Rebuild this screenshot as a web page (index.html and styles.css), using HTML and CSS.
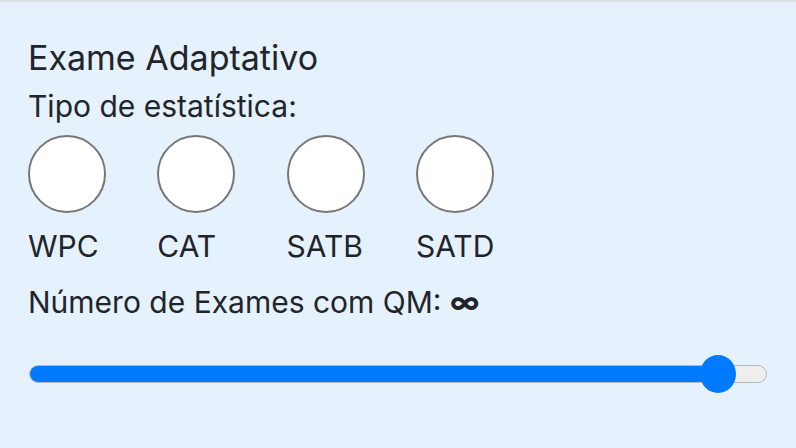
FILE: index.html
```html
<!DOCTYPE html>
<html lang="pt">
<head>
<meta charset="utf-8">
<link rel="stylesheet" href="styles.css">
</head>
<body>
<div class="panel">
  <div class="title">Exame Adaptativo</div>
  <div class="label">Tipo de estatística:</div>
  <div class="radios">
    <div class="opt"><span class="circle"></span><span class="opt-text">WPC</span></div>
    <div class="opt"><span class="circle"></span><span class="opt-text">CAT</span></div>
    <div class="opt"><span class="circle"></span><span class="opt-text">SATB</span></div>
    <div class="opt"><span class="circle"></span><span class="opt-text">SATD</span></div>
  </div>
  <div class="label count">Número de Exames com QM: <span class="inf">∞</span></div>
  <div class="slider">
    <div class="track">
      <div class="fill" style="width: 93.4%"></div>
    </div>
    <div class="thumb" style="left: 93.4%"></div>
  </div>
</div>
</body>
</html>
```
FILE: styles.css
```css
html, body {
  margin: 0;
  padding: 0;
  background: #e5f1fd;
}
body {
  width: 796px;
  height: 448px;
  overflow: hidden;
  font-family: "Inter", "Liberation Sans", sans-serif;
  color: #212529;
}
.panel {
  border-top: 2px solid #dcdfe3;
  padding: 0 28px;
  height: 446px;
}
.title {
  font-size: 34px;
  line-height: 40px;
  margin-top: 36px;
}
.label {
  font-size: 30px;
  line-height: 36px;
  margin-top: 10px;
}
.radios {
  display: flex;
  gap: 51.3px;
  margin-top: 11px;
}
.opt {
  display: flex;
  flex-direction: column;
  align-items: flex-start;
  width: 78px;
}
.circle {
  width: 78px;
  height: 78px;
  box-sizing: border-box;
  border: 2px solid #777;
  border-radius: 50%;
  background: #fff;
}
.opt-text {
  font-size: 30px;
  line-height: 36px;
  margin-top: 15px;
}
.count {
  margin-top: 20px;
}
.inf {
  font-weight: 700;
}
.slider {
  position: relative;
  margin: 45px 1px 0 1px;
  height: 18px;
}
.track {
  height: 18px;
  box-sizing: border-box;
  border: 1.5px solid #b8b8b8;
  border-radius: 9px;
  background: #eeeeee;
  overflow: hidden;
}
.fill {
  height: 100%;
  background: #007bff;
}
.thumb {
  position: absolute;
  top: 50%;
  width: 36px;
  height: 38px;
  margin-left: -18px;
  margin-top: -19px;
  border-radius: 50%;
  background: #007bff;
}
```
